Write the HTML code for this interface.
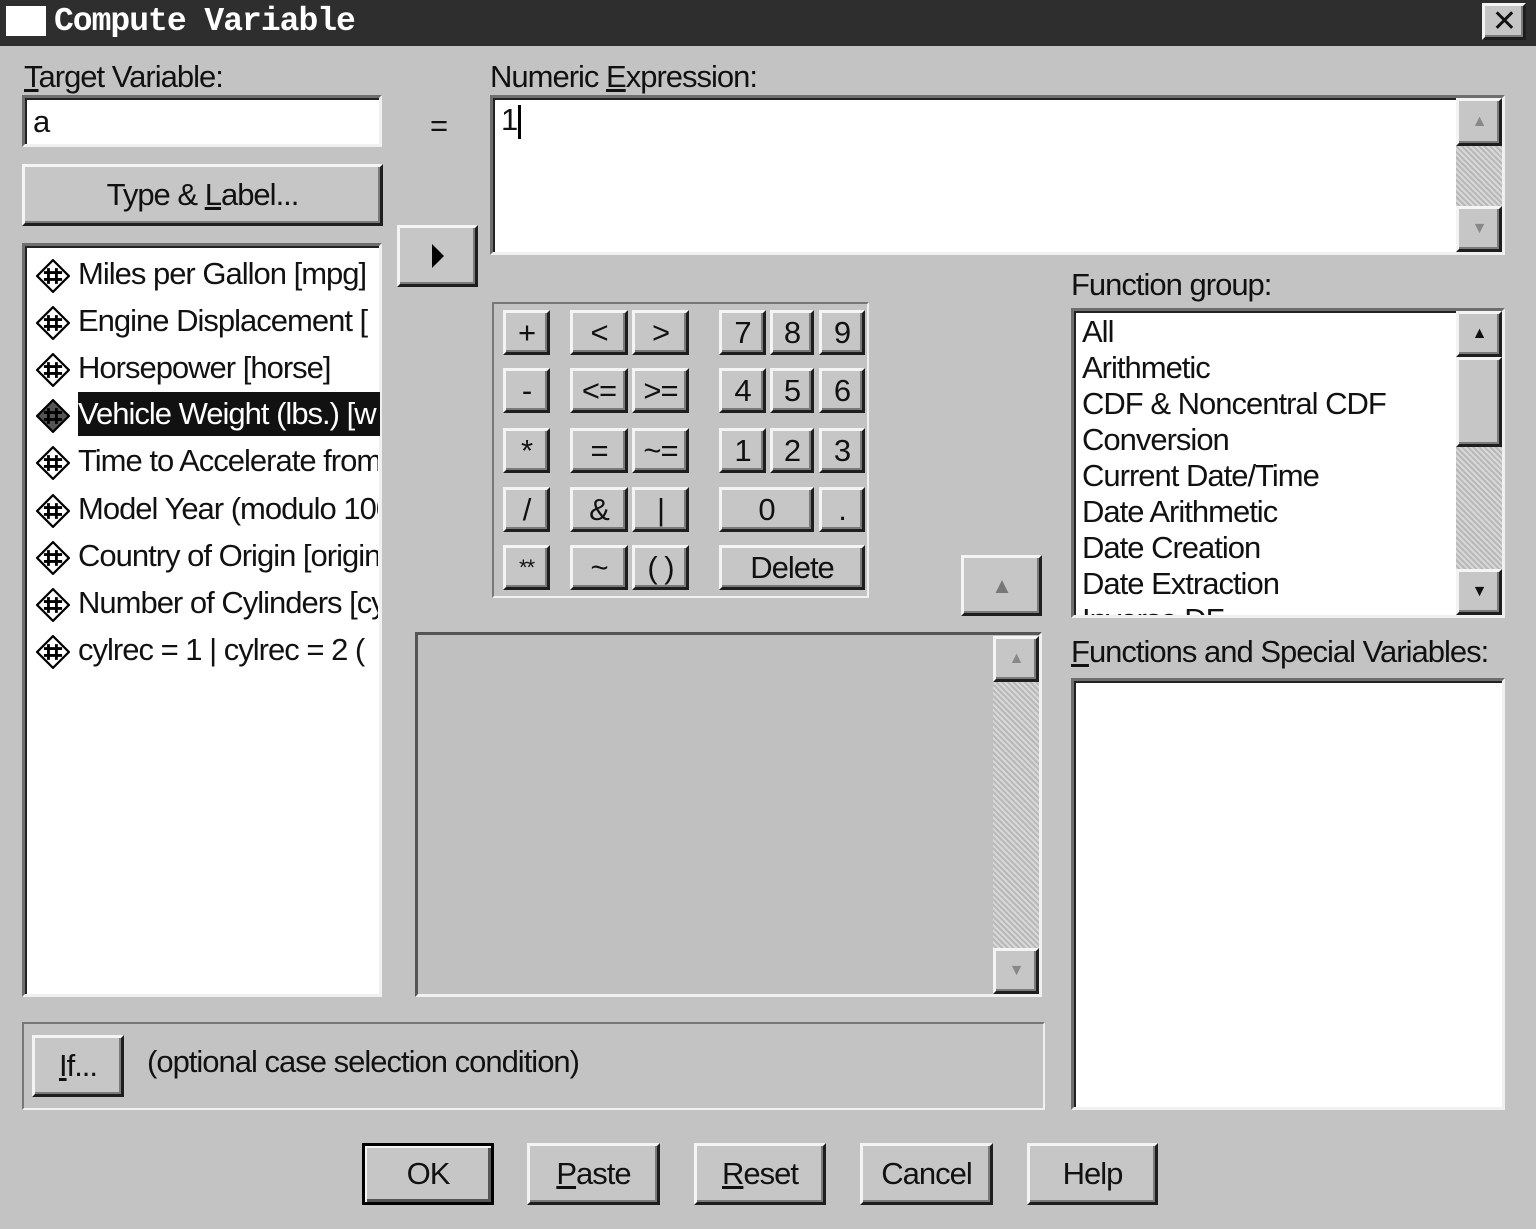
<!DOCTYPE html><html><head><style>
body{margin:0;width:1536px;height:1229px;background:#c3c3c3;font-family:"Liberation Sans",sans-serif;font-size:31px;color:#111;position:relative;overflow:hidden}
div,span{position:absolute;box-sizing:border-box}
.title{left:0;top:0;width:1536px;height:46px;background:#2e2e2e}
.btn{background:#c6c6c6;border:3px solid;border-color:#f4f4f4 #1e1e1e #1e1e1e #f4f4f4;box-shadow:inset -2px -2px 0 #7a7a7a;text-align:center;display:flex;align-items:center;justify-content:center;letter-spacing:-1px}
.sunk{background:#fff;border:3px solid;border-color:#6e6e6e #f0f0f0 #f0f0f0 #6e6e6e;box-shadow:inset 2px 2px 0 #222}
.lbl{white-space:nowrap;letter-spacing:-1px}
.sb{background:repeating-linear-gradient(45deg,#d8d8d8 0 2px,#b8b8b8 2px 4px)}
.kb{font-size:31px}
.row{left:30px;height:44px;white-space:nowrap;overflow:hidden;width:348px;letter-spacing:-1px;line-height:44px}
.ic{display:inline-block;width:34px;height:34px;vertical-align:middle;margin:0 8px 0 6px}
</style></head><body>
<div class="title"></div>
<div style="left:6px;top:6px;width:40px;height:30px;background:#fff"></div>
<div class="lbl" style="left:54px;top:3px;color:#fff;font-family:'Liberation Mono',monospace;font-weight:bold;font-size:33px">Compute Variable</div>
<div class="btn" style="left:1482px;top:3px;width:44px;height:37px;font-size:30px">✕</div>

<div class="lbl" style="left:24px;top:59px"><u>T</u>arget Variable:</div>
<div class="sunk" style="left:22px;top:95px;width:360px;height:52px;padding:6px 8px">a</div>
<div class="lbl" style="left:430px;top:108px">=</div>
<div class="btn" style="left:22px;top:164px;width:361px;height:62px"><span style="position:static">Type &amp; <u>L</u>abel...</span></div>

<div class="sunk" style="left:22px;top:243px;width:360px;height:754px"></div>
<div class="row" style="top:252px"><svg class="ic" viewBox="0 0 30 30"><path d="M15 1L29 15 15 29 1 15Z" fill="#fff" stroke="#000" stroke-width="2"/><path d="M11 8v14M18 8v14M7 12h16M7 18h16" stroke="#000" stroke-width="2.5"/></svg>Miles per Gallon [mpg]</div>
<div class="row" style="top:299px"><svg class="ic" viewBox="0 0 30 30"><path d="M15 1L29 15 15 29 1 15Z" fill="#fff" stroke="#000" stroke-width="2"/><path d="M11 8v14M18 8v14M7 12h16M7 18h16" stroke="#000" stroke-width="2.5"/></svg>Engine Displacement [</div>
<div class="row" style="top:346px"><svg class="ic" viewBox="0 0 30 30"><path d="M15 1L29 15 15 29 1 15Z" fill="#fff" stroke="#000" stroke-width="2"/><path d="M11 8v14M18 8v14M7 12h16M7 18h16" stroke="#000" stroke-width="2.5"/></svg>Horsepower [horse]</div>
<div style="left:78px;top:392px;width:302px;height:44px;background:#111"></div>
<div class="row" style="top:392px;color:#fff"><svg class="ic" viewBox="0 0 30 30"><path d="M15 1L29 15 15 29 1 15Z" fill="#555" stroke="#000" stroke-width="2"/><path d="M11 8v14M18 8v14M7 12h16M7 18h16" stroke="#000" stroke-width="2.5"/></svg>Vehicle Weight (lbs.) [w</div>
<div class="row" style="top:439px"><svg class="ic" viewBox="0 0 30 30"><path d="M15 1L29 15 15 29 1 15Z" fill="#fff" stroke="#000" stroke-width="2"/><path d="M11 8v14M18 8v14M7 12h16M7 18h16" stroke="#000" stroke-width="2.5"/></svg>Time to Accelerate from</div>
<div class="row" style="top:487px"><svg class="ic" viewBox="0 0 30 30"><path d="M15 1L29 15 15 29 1 15Z" fill="#fff" stroke="#000" stroke-width="2"/><path d="M11 8v14M18 8v14M7 12h16M7 18h16" stroke="#000" stroke-width="2.5"/></svg>Model Year (modulo 100</div>
<div class="row" style="top:534px"><svg class="ic" viewBox="0 0 30 30"><path d="M15 1L29 15 15 29 1 15Z" fill="#fff" stroke="#000" stroke-width="2"/><path d="M11 8v14M18 8v14M7 12h16M7 18h16" stroke="#000" stroke-width="2.5"/></svg>Country of Origin [origin</div>
<div class="row" style="top:581px"><svg class="ic" viewBox="0 0 30 30"><path d="M15 1L29 15 15 29 1 15Z" fill="#fff" stroke="#000" stroke-width="2"/><path d="M11 8v14M18 8v14M7 12h16M7 18h16" stroke="#000" stroke-width="2.5"/></svg>Number of Cylinders [cy</div>
<div class="row" style="top:628px"><svg class="ic" viewBox="0 0 30 30"><path d="M15 1L29 15 15 29 1 15Z" fill="#fff" stroke="#000" stroke-width="2"/><path d="M11 8v14M18 8v14M7 12h16M7 18h16" stroke="#000" stroke-width="2.5"/></svg>cylrec = 1 | cylrec = 2 (</div>

<div class="btn" style="left:397px;top:225px;width:81px;height:62px"><svg width="16" height="24" style="position:static"><path d="M2 0L14 12 2 24Z" fill="#000"/></svg></div>

<div class="lbl" style="left:490px;top:59px">Numeric <u>E</u>xpression:</div>
<div class="sunk" style="left:490px;top:95px;width:1015px;height:160px;padding:4px 8px">1<span style="position:static;display:inline-block;width:3px;height:34px;background:#000;vertical-align:middle"></span></div>
<div class="sb" style="left:1456px;top:98px;width:46px;height:154px"></div>
<div class="btn" style="left:1456px;top:98px;width:46px;height:48px;font-size:16px;color:#888">▲</div>
<div class="btn" style="left:1456px;top:206px;width:46px;height:46px;font-size:16px;color:#888">▼</div>

<div style="left:492px;top:302px;width:377px;height:296px;border:2px solid;border-color:#777 #f0f0f0 #f0f0f0 #777"></div>
<div class="btn kb" style="left:503px;top:310px;width:47px;height:45px">+</div>
<div class="btn kb" style="left:570px;top:310px;width:58px;height:45px">&lt;</div>
<div class="btn kb" style="left:632px;top:310px;width:57px;height:45px">&gt;</div>
<div class="btn kb" style="left:719px;top:310px;width:47px;height:45px">7</div>
<div class="btn kb" style="left:770px;top:310px;width:44px;height:45px">8</div>
<div class="btn kb" style="left:819px;top:310px;width:46px;height:45px">9</div>
<div class="btn kb" style="left:503px;top:368px;width:47px;height:45px">-</div>
<div class="btn kb" style="left:570px;top:368px;width:58px;height:45px">&lt;=</div>
<div class="btn kb" style="left:632px;top:368px;width:57px;height:45px">&gt;=</div>
<div class="btn kb" style="left:719px;top:368px;width:47px;height:45px">4</div>
<div class="btn kb" style="left:770px;top:368px;width:44px;height:45px">5</div>
<div class="btn kb" style="left:819px;top:368px;width:46px;height:45px">6</div>
<div class="btn kb" style="left:503px;top:428px;width:47px;height:45px">*</div>
<div class="btn kb" style="left:570px;top:428px;width:58px;height:45px">=</div>
<div class="btn kb" style="left:632px;top:428px;width:57px;height:45px">~=</div>
<div class="btn kb" style="left:719px;top:428px;width:47px;height:45px">1</div>
<div class="btn kb" style="left:770px;top:428px;width:44px;height:45px">2</div>
<div class="btn kb" style="left:819px;top:428px;width:46px;height:45px">3</div>
<div class="btn kb" style="left:503px;top:487px;width:47px;height:45px">/</div>
<div class="btn kb" style="left:570px;top:487px;width:58px;height:45px">&amp;</div>
<div class="btn kb" style="left:632px;top:487px;width:57px;height:45px">|</div>
<div class="btn kb" style="left:719px;top:487px;width:95px;height:45px">0</div>
<div class="btn kb" style="left:819px;top:487px;width:46px;height:45px">.</div>
<div class="btn kb" style="left:503px;top:545px;width:47px;height:45px;font-size:22px">**</div>
<div class="btn kb" style="left:570px;top:545px;width:58px;height:45px">~</div>
<div class="btn kb" style="left:632px;top:545px;width:57px;height:45px">( )</div>
<div class="btn kb" style="left:719px;top:545px;width:146px;height:45px">Delete</div>

<div class="btn" style="left:961px;top:555px;width:81px;height:61px;font-size:22px;color:#777">▲</div>

<div style="left:415px;top:632px;width:627px;height:365px;border:3px solid;border-color:#555 #f0f0f0 #f0f0f0 #555;background:#c0c0c0"></div>
<div class="sb" style="left:993px;top:636px;width:46px;height:358px"></div>
<div class="btn" style="left:993px;top:636px;width:46px;height:46px;font-size:16px;color:#888">▲</div>
<div class="btn" style="left:993px;top:948px;width:46px;height:46px;font-size:16px;color:#888">▼</div>

<div class="lbl" style="left:1071px;top:267px">Function group:</div>
<div class="sunk" style="left:1071px;top:308px;width:434px;height:310px;overflow:hidden"><div class="lbl" style="left:8px;top:3px;line-height:36px">All<br>Arithmetic<br>CDF &amp; Noncentral CDF<br>Conversion<br>Current Date/Time<br>Date Arithmetic<br>Date Creation<br>Date Extraction<br>Inverse DF</div></div>
<div class="sb" style="left:1456px;top:311px;width:46px;height:304px"></div>
<div class="btn" style="left:1456px;top:311px;width:46px;height:46px;font-size:16px">▲</div>
<div class="btn" style="left:1456px;top:357px;width:46px;height:90px"></div>
<div class="btn" style="left:1456px;top:569px;width:46px;height:46px;font-size:16px">▼</div>

<div class="lbl" style="left:1071px;top:634px"><u>F</u>unctions and Special Variables:</div>
<div class="sunk" style="left:1071px;top:678px;width:434px;height:432px"></div>

<div style="left:22px;top:1022px;width:1023px;height:88px;border:2px solid;border-color:#777 #f0f0f0 #f0f0f0 #777"></div>
<div class="btn" style="left:32px;top:1035px;width:92px;height:62px"><span style="position:static"><u>I</u>f...</span></div>
<div class="lbl" style="left:147px;top:1044px">(optional case selection condition)</div>

<div class="btn" style="left:362px;top:1143px;width:132px;height:62px;border-color:#000;box-shadow:inset 2px 2px 0 #f4f4f4,inset -3px -3px 0 #555">OK</div>
<div class="btn" style="left:527px;top:1143px;width:133px;height:62px"><span style="position:static"><u>P</u>aste</span></div>
<div class="btn" style="left:694px;top:1143px;width:132px;height:62px"><span style="position:static"><u>R</u>eset</span></div>
<div class="btn" style="left:860px;top:1143px;width:133px;height:62px">Cancel</div>
<div class="btn" style="left:1027px;top:1143px;width:131px;height:62px">Help</div>
</body></html>
